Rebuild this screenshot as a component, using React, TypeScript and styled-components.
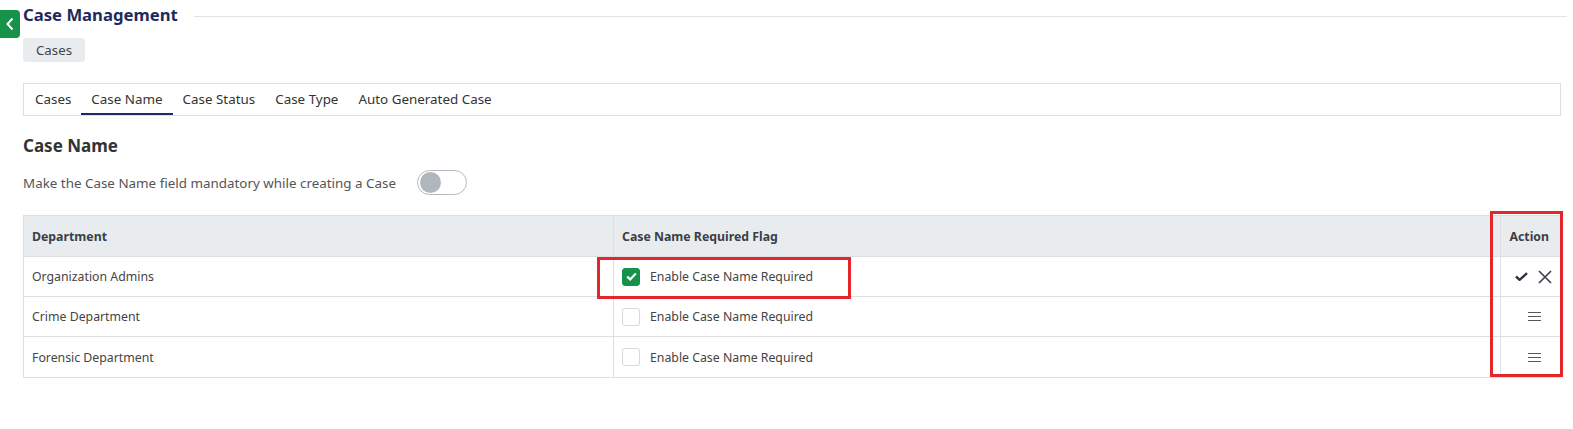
import React from "react";
import styled, { createGlobalStyle } from "styled-components";

const Global = createGlobalStyle`
  html, body { margin: 0; padding: 0; background: #fff; }
  body { font-family: "Noto Sans", "Open Sans", sans-serif; color: #333; }
  * { box-sizing: border-box; }
`;

const Page = styled.div`
  position: relative;
  padding: 4px 12px 0 23px;
  width: 1573px;
`;

const BackTab = styled.button`
  position: absolute;
  left: 0;
  top: 10px;
  width: 20px;
  height: 28px;
  border: none;
  padding: 0;
  background: #16924a;
  border-radius: 0 4px 4px 0;
  display: flex;
  align-items: center;
  justify-content: center;
`;

const TitleRow = styled.div`
  display: flex;
  align-items: center;
  gap: 16px;
  height: 22px;
`;

const Title = styled.h1`
  margin: -2px 0 0;
  font-size: 16.7px;
  font-weight: 700;
  color: #1f2a5c;
  white-space: nowrap;
`;

const TitleRule = styled.div`
  flex: 1;
  height: 1px;
  background: #e1e4e8;
  margin-top: 3px;
  margin-right: -6px;
`;

const Chip = styled.div`
  margin-top: 12px;
  display: inline-flex;
  align-items: center;
  justify-content: center;
  width: 62px;
  height: 24px;
  background: #e9ecef;
  border-radius: 4px;
  font-size: 13.3px;
  color: #444;
`;

const Tabs = styled.div`
  margin-top: 21px;
  height: 33px;
  border: 1px solid #dcdfe3;
  display: flex;
  padding-left: 1px;
`;

const Tab = styled.div<{ $active?: boolean }>`
  padding: 1px 10px 0;
  display: flex;
  align-items: center;
  font-size: 13.4px;
  color: #333;
  border-bottom: 2px solid ${(p) => (p.$active ? "#1f2a6a" : "transparent")};
`;

const SectionTitle = styled.h2`
  margin: 18px 0 0;
  font-size: 17px;
  font-weight: 700;
  color: #333;
`;

const ToggleRow = styled.div`
  margin-top: 13px;
  display: flex;
  align-items: center;
  gap: 21px;
  font-size: 13.4px;
  color: #555;
`;

const Toggle = styled.div`
  width: 50px;
  height: 25px;
  border: 1px solid #b5bac1;
  border-radius: 13px;
  display: flex;
  align-items: center;
  padding-left: 2px;
`;

const Knob = styled.div`
  width: 21px;
  height: 21px;
  border-radius: 50%;
  background: #b0b6bd;
`;

const Table = styled.div`
  margin-top: 20px;
  border: 1px solid #dcdfe3;
  display: grid;
  grid-template-columns: 590px 1fr 59px;
`;

const Cell = styled.div<{ $head?: boolean; $right?: boolean; $last?: boolean; $lastRow?: boolean }>`
  position: relative;
  height: ${(p) => (p.$head ? "41px" : "40px")};
  display: flex;
  align-items: center;
  justify-content: ${(p) => (p.$right ? "flex-end" : "flex-start")};
  padding: ${(p) => (p.$right ? (p.$head ? "0 11px 0 0" : "0 8px 0 0") : "0 8px")};
  background: ${(p) => (p.$head ? "#e9ecef" : "#fff")};
  font-size: 12.3px;
  font-weight: ${(p) => (p.$head ? 700 : 400)};
  color: ${(p) => (p.$head ? "#3a3f45" : "#444")};
  border-right: ${(p) => (p.$last ? "none" : "1px solid #dcdfe3")};
  border-bottom: ${(p) => (p.$lastRow ? "none" : "1px solid #dcdfe3")};
`;

const FlagCell = styled(Cell)`
  padding-left: 8px;
  gap: 10px;
`;

const Check = styled.span<{ $on?: boolean }>`
  width: 18px;
  height: 18px;
  border-radius: 3px;
  border: 1px solid ${(p) => (p.$on ? "#16924a" : "#d5d8dc")};
  background: ${(p) => (p.$on ? "#16924a" : "#fff")};
  display: inline-flex;
  align-items: center;
  justify-content: center;
`;

const Highlight = styled.div`
  position: absolute;
  z-index: 2;
  border: 3px solid #e3262a;
  pointer-events: none;
`;

const Actions = styled.div`
  display: flex;
  align-items: center;
  gap: 10px;
`;

const MenuWrap = styled.span`
  display: flex;
  padding-right: 11px;
`;

const CheckIcon = () => (
  <svg width="13" height="9" viewBox="0 0 13 9">
    <path d="M1 4.5 L4.6 7.8 L12 1.2" fill="none" stroke="#2d3340" strokeWidth="2.4" />
  </svg>
);

const CloseIcon = () => (
  <svg width="14" height="14" viewBox="0 0 14 14">
    <path d="M1 1 L13 13 M13 1 L1 13" stroke="#3a3f48" strokeWidth="1.6" />
  </svg>
);

const MenuIcon = () => (
  <svg width="13" height="9" viewBox="0 0 13 9">
    <path d="M0 0.5 H13 M0 4.5 H13 M0 8.5 H13" stroke="#555a60" strokeWidth="1" />
  </svg>
);

const rows = [
  { dept: "Organization Admins", on: true, editing: true },
  { dept: "Crime Department", on: false, editing: false },
  { dept: "Forensic Department", on: false, editing: false },
];

export default function App() {
  return (
    <>
      <Global />
      <Page>
        <BackTab aria-label="back">
          <svg width="10" height="14" viewBox="0 0 10 14">
            <path d="M7.5 1.5 L2.5 7 L7.5 12.5" fill="none" stroke="#fff" strokeWidth="2" />
          </svg>
        </BackTab>
        <TitleRow>
          <Title>Case Management</Title>
          <TitleRule />
        </TitleRow>
        <Chip>Cases</Chip>
        <Tabs>
          <Tab>Cases</Tab>
          <Tab $active>Case Name</Tab>
          <Tab>Case Status</Tab>
          <Tab>Case Type</Tab>
          <Tab>Auto Generated Case</Tab>
        </Tabs>
        <SectionTitle>Case Name</SectionTitle>
        <ToggleRow>
          <span>Make the Case Name field mandatory while creating a Case</span>
          <Toggle>
            <Knob />
          </Toggle>
        </ToggleRow>
        <Table>
          <Cell $head>Department</Cell>
          <Cell $head>Case Name Required Flag</Cell>
          <Cell $head $right $last>
            Action
            <Highlight style={{ left: -11, top: -5, width: 73, height: 166 }} />
          </Cell>
          {rows.map((r, i) => {
            const lastRow = i === rows.length - 1;
            return (
              <React.Fragment key={r.dept}>
                <Cell $lastRow={lastRow}>{r.dept}</Cell>
                <FlagCell $lastRow={lastRow}>
                  <Check $on={r.on}>
                    {r.on && (
                      <svg width="11" height="9" viewBox="0 0 11 9">
                        <path d="M1.2 4.6 L4.2 7.4 L9.8 1.6" fill="none" stroke="#fff" strokeWidth="2.2" />
                      </svg>
                    )}
                  </Check>
                  Enable Case Name Required
                  {r.editing && <Highlight style={{ left: -17, top: 0, width: 254, height: 42 }} />}
                </FlagCell>
                <Cell $right $last $lastRow={lastRow}>
                  {r.editing ? (
                    <Actions>
                      <CheckIcon />
                      <CloseIcon />
                    </Actions>
                  ) : (
                    <MenuWrap>
                      <MenuIcon />
                    </MenuWrap>
                  )}
                </Cell>
              </React.Fragment>
            );
          })}
        </Table>
      </Page>
    </>
  );
}
